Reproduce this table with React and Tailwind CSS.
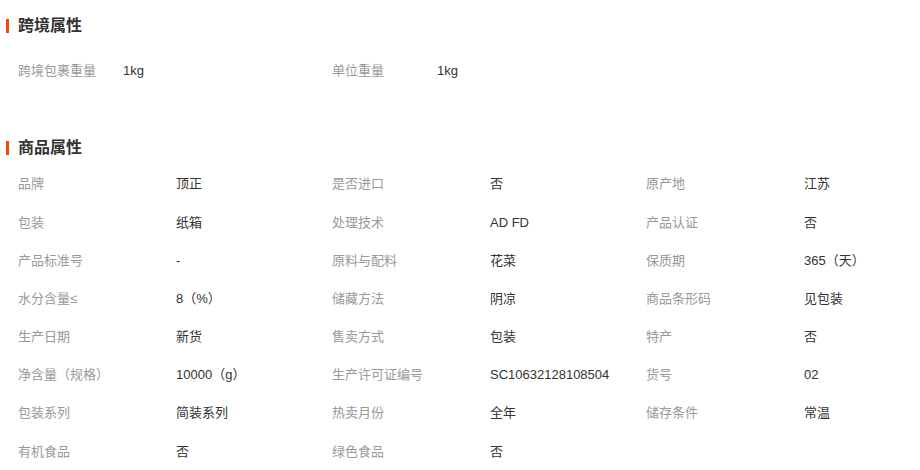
import React from "react";

const font = { fontFamily: '"Liberation Sans", "Noto Sans CJK SC", sans-serif' };

const cross = [
  ["跨境包裹重量", "1kg"],
  ["单位重量", "1kg"],
];

const attrs = [
  ["品牌", "顶正"], ["是否进口", "否"], ["原产地", "江苏"],
  ["包装", "纸箱"], ["处理技术", "AD FD"], ["产品认证", "否"],
  ["产品标准号", "-"], ["原料与配料", "花菜"], ["保质期", "365（天）"],
  ["水分含量≤", "8（%）"], ["储藏方法", "阴凉"], ["商品条形码", "见包装"],
  ["生产日期", "新货"], ["售卖方式", "包装"], ["特产", "否"],
  ["净含量（规格）", "10000（g）"], ["生产许可证编号", "SC10632128108504"], ["货号", "02"],
  ["包装系列", "简装系列"], ["热卖月份", "全年"], ["储存条件", "常温"],
  ["有机食品", "否"], ["绿色食品", "否"],
];

function Title({ children }) {
  return (
    <div className="flex items-center h-[20px]">
      <div className="w-[3px] h-[14px] bg-[#ff4400] ml-[6px] mr-[9px]" />
      <span className="text-[16px] font-bold text-[#333]">{children}</span>
    </div>
  );
}

export default function App() {
  return (
    <div className="w-[920px] h-[470px] bg-white overflow-hidden pt-[16px]" style={font}>
      <Title>跨境属性</Title>
      <div className="grid grid-cols-[314px_314px_314px] pl-[18px] mt-[16px]">
        {cross.map(([k, v]) => (
          <div key={k} className="flex items-center h-[38px] text-[13px]">
            <span className="w-[105px] text-[#999]">{k}</span>
            <span className="text-[#333]">{v}</span>
          </div>
        ))}
      </div>
      <div className="mt-[48px]">
        <Title>商品属性</Title>
      </div>
      <div className="grid grid-cols-[314px_314px_314px] pl-[18px] mt-[7px]">
        {attrs.map(([k, v]) => (
          <div key={k} className="flex items-center h-[38.2px] text-[13px]">
            <span className="w-[158px] text-[#999]">{k}</span>
            <span className="text-[#333]">{v}</span>
          </div>
        ))}
      </div>
    </div>
  );
}
